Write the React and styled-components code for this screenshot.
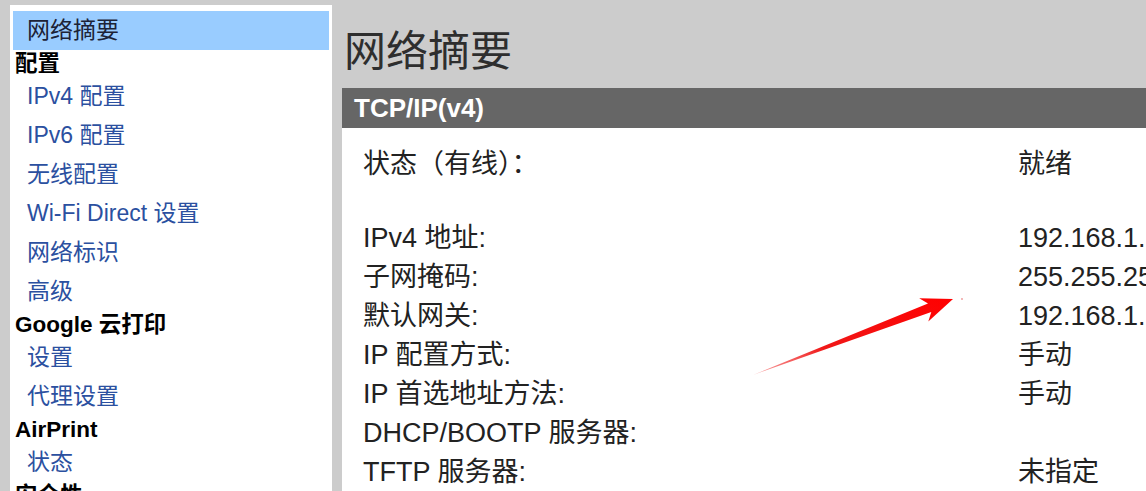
import styled, { createGlobalStyle } from "styled-components";

const GlobalStyle = createGlobalStyle`
  html, body {
    margin: 0;
    padding: 0;
    background: #cccccc;
    overflow: hidden;
    font-family: "Liberation Sans", "Noto Sans CJK SC", sans-serif;
  }
`;

const menu = [
  { type: "item", label: "网络摘要", active: true },
  { type: "head", label: "配置" },
  { type: "item", label: "IPv4 配置" },
  { type: "item", label: "IPv6 配置" },
  { type: "item", label: "无线配置" },
  { type: "item", label: "Wi-Fi Direct 设置" },
  { type: "item", label: "网络标识" },
  { type: "item", label: "高级" },
  { type: "head", label: "Google 云打印" },
  { type: "item", label: "设置" },
  { type: "item", label: "代理设置" },
  { type: "head", label: "AirPrint" },
  { type: "item", label: "状态" },
  { type: "head", label: "安全性" },
];

const rows = [
  ["IPv4 地址:", "192.168.1.100"],
  ["子网掩码:", "255.255.255.0"],
  ["默认网关:", "192.168.1.1"],
  ["IP 配置方式:", "手动"],
  ["IP 首选地址方法:", "手动"],
  ["DHCP/BOOTP 服务器:", ""],
  ["TFTP 服务器:", "未指定"],
];

export default function App() {
  return (
    <>
      <GlobalStyle />
      <Page>
        <Sidebar>
          {menu.map((m, i) =>
            m.type === "head" ? (
              <NavHeading key={i}>{m.label}</NavHeading>
            ) : (
              <NavItem key={i} $active={m.active}>
                {m.label}
              </NavItem>
            )
          )}
        </Sidebar>
        <Main>
          <Title>网络摘要</Title>
          <SectionBar>TCP/IP(v4)</SectionBar>
          <Content>
            <Row>
              <Label>状态（有线）：</Label>
              <Value>就绪</Value>
            </Row>
            <RowGroup>
              {rows.map(([l, v]) => (
                <Row key={l}>
                  <Label>{l}</Label>
                  <Value>{v}</Value>
                </Row>
              ))}
            </RowGroup>
            <Arrow viewBox="0 0 230 100" width="230" height="100">
              <defs>
                <linearGradient id="shaft" x1="0" y1="1" x2="1" y2="0">
                  <stop offset="0" stopColor="#f23a3a" stopOpacity="0.45" />
                  <stop offset="0.35" stopColor="#f01818" />
                  <stop offset="1" stopColor="#ff0000" />
                </linearGradient>
              </defs>
              <polygon
                points="11,87 189.3,24.1 186.3,33.4 211,11 177.2,10.2 186.0,15.6"
                fill="url(#shaft)"
              />
              <circle cx="220" cy="11" r="0.9" fill="#e05050" opacity="0.6" />
            </Arrow>
          </Content>
        </Main>
      </Page>
    </>
  );
}

const Page = styled.div`
  display: flex;
  align-items: flex-start;
  height: 100vh;
`;

const Sidebar = styled.div`
  width: 316px;
  flex-shrink: 0;
  margin: 5px 0 0 10px;
  padding: 6px 3px 0;
  min-height: 100vh;
  background: #ffffff;
`;

const NavItem = styled.div`
  height: 39px;
  line-height: 39px;
  padding-left: 14px;
  font-size: 23px;
  white-space: nowrap;
  color: ${(p) => (p.$active ? "#1c2236" : "#2b50a0")};
  background: ${(p) => (p.$active ? "#99ccff" : "transparent")};
`;

const NavHeading = styled.div`
  height: 27px;
  line-height: 27px;
  padding-left: 2px;
  font-size: 22.5px;
  font-weight: bold;
  color: #000000;
  white-space: nowrap;
`;

const Main = styled.div`
  flex: 1;
  margin-left: 10px;
  min-width: 0;
`;

const Title = styled.h1`
  margin: 0;
  height: 88px;
  box-sizing: border-box;
  padding: 6px 0 0 2px;
  display: flex;
  align-items: center;
  font-family: "Noto Sans CJK SC", sans-serif;
  font-weight: normal;
  font-size: 42px;
  color: #2e2e2e;
`;

const SectionBar = styled.div`
  height: 40px;
  line-height: 40px;
  padding-left: 12px;
  background: #666666;
  color: #ffffff;
  font-size: 26px;
  font-weight: bold;
`;

const Content = styled.div`
  position: relative;
  background: #ffffff;
  padding: 17px 0 0 21px;
  min-height: 400px;
`;

const RowGroup = styled.div`
  margin-top: 35px;
`;

const Row = styled.div`
  display: flex;
  height: 39px;
  line-height: 39px;
  font-size: 27px;
  color: #222222;
  white-space: nowrap;
`;

const Label = styled.div`
  width: 655px;
  flex-shrink: 0;
`;

const Value = styled.div``;

const Arrow = styled.svg`
  position: absolute;
  left: 400px;
  top: 160px;
  overflow: visible;
`;
